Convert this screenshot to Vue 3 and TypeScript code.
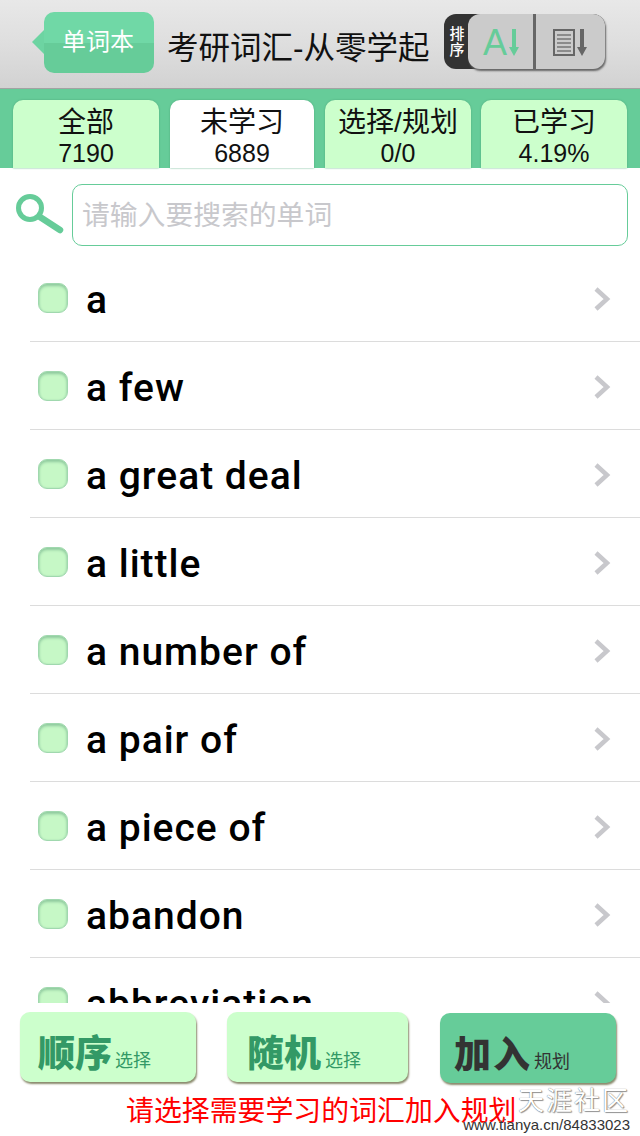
<script setup lang="ts">
const tabs = [
  { label: '全部', value: '7190', w: 146 },
  { label: '未学习', value: '6889', w: 144, active: true },
  { label: '选择/规划', value: '0/0', w: 146 },
  { label: '已学习', value: '4.19%', w: 146 },
]
const words = ['a', 'a few', 'a great deal', 'a little', 'a number of', 'a pair of', 'a piece of', 'abandon', 'abbreviation']
</script>

<template>
  <div class="page">
    <header class="nav">
      <button class="back"><span class="back-text">单词本</span></button>
      <h1 class="title">考研词汇-从零学起</h1>
      <div class="sort">
        <div class="sort-label"><span>排</span><span>序</span></div>
        <div class="seg">
          <div class="seg-item first">
            <span class="az">A</span>
            <svg class="down" width="10" height="27" viewBox="0 0 10 27"><path d="M3 0h4v18h3l-5 9-5-9h3z" fill="#66cc99"/></svg>
          </div>
          <div class="seg-item second">
            <svg width="34" height="28" viewBox="0 0 34 28">
              <path d="M1 1h20v25H1z" fill="none" stroke="#666" stroke-width="2"/>
              <path d="M4 6h14M4 10h14M4 14h14M4 18h14M4 22h14" stroke="#777" stroke-width="1.3"/>
              <path d="M27 0h4v18h3l-5 9-5-9h3z" fill="#666"/>
            </svg>
          </div>
        </div>
      </div>
    </header>

    <nav class="tabs">
      <div v-for="t in tabs" :key="t.label" class="tab" :class="{ active: t.active }" :style="{ width: t.w + 'px' }">
        <div class="tab-label">{{ t.label }}</div>
        <div class="tab-value">{{ t.value }}</div>
      </div>
    </nav>

    <div class="search">
      <svg class="lens" width="50" height="42" viewBox="0 0 50 42">
        <circle cx="15" cy="15" r="11.5" fill="none" stroke="#66cc99" stroke-width="5"/>
        <path d="M25 24l20 13" stroke="#66cc99" stroke-width="6.5" stroke-linecap="round"/>
      </svg>
      <div class="input">请输入要搜索的单词</div>
    </div>

    <ul class="list">
      <li v-for="w in words" :key="w" class="row">
        <span class="check"></span>
        <span class="word">{{ w }}</span>
        <svg class="chev" width="18" height="26" viewBox="0 0 18 26"><path d="M3 3l11 10L3 23" fill="none" stroke="#c8c8cc" stroke-width="4.5"/></svg>
      </li>
    </ul>

    <footer class="footer">
      <div class="actions">
        <div class="act w1"><b>顺序</b><small>选择</small></div>
        <div class="act w2"><b>随机</b><small>选择</small></div>
        <div class="act w3 primary"><b>加入</b><small>规划</small></div>
      </div>
      <p class="hint">请选择需要学习的词汇加入规划</p>
      <div class="mark">
        <div class="mark-name">天涯社区</div>
        <div class="mark-url">www.tianya.cn/84833023</div>
      </div>
    </footer>
  </div>
</template>

<style>
html, body { margin: 0; padding: 0; background: #fff; }
</style>

<style scoped>
.page {
  width: 640px;
  height: 1136px;
  display: flex;
  flex-direction: column;
  overflow: hidden;
  background: #fff;
  font-family: "Liberation Sans", "Noto Sans CJK SC", sans-serif;
}
.nav {
  height: 89px;
  box-sizing: border-box;
  flex: none;
  display: flex;
  align-items: flex-start;
  padding: 12px 35px 0 32px;
  background: linear-gradient(#e8e8e8 0, #dedede 50%, #d2d2d2 100%);
  border-bottom: 1px solid #a3a3a3;
}
.back {
  position: relative;
  margin: 0 0 0 12px;
  padding: 0;
  border: 0;
  width: 110px;
  height: 61px;
  border-radius: 10px;
  background: linear-gradient(#70d8a6 0 50%, #66cc99 50%);
  color: #fff;
  font-family: inherit;
  font-size: 24px;
}
.back::before {
  content: "";
  position: absolute;
  left: -12px;
  top: 18px;
  border: 12px solid transparent;
  border-left: 0;
  border-right-color: #6dd4a2;
}
.back-text { position: relative; top: -3px; left: -1px; }
.title {
  margin: 16px 0 0 13px;
  width: 277px;
  font-size: 31.5px;
  line-height: 40px;
  font-weight: 400;
  color: #111;
  white-space: nowrap;
}
.sort {
  position: relative;
  width: 161px;
  height: 55px;
  margin-top: 2px;
  display: flex;
  border-radius: 12px;
  background: #333;
}
.sort-label {
  width: 26px;
  box-sizing: border-box;
  display: flex;
  flex-direction: column;
  justify-content: center;
  align-items: center;
  color: #fff;
  font-size: 15px;
  line-height: 16px;
  font-weight: 500;
}
.seg {
  flex: 1;
  display: flex;
  border-radius: 12px;
  background: #cbcbcb;
  box-shadow: 1px 2px 2px #666;
  margin-left: -2px;
}
.seg-item {
  flex: 1;
  display: flex;
  align-items: center;
  justify-content: center;
}
.seg-item.first {
  flex: none;
  width: 65px;
  border-right: 3px solid #666;
  gap: 2px;
  padding-top: 2px;
  justify-content: flex-start;
}
.seg-item.first .az { margin-left: 15px; }
.seg-item.second { padding-top: 2px; padding-right: 2px; }
.az {
  color: #66cc99;
  font-size: 36px;
  line-height: 36px;
}
.tabs {
  flex: none;
  height: 79px;
  box-sizing: border-box;
  padding: 11px 0 0 13px;
  display: flex;
  gap: 11px;
  background: #66cc99;
}
.tab {
  flex: none;
  border-radius: 10px 10px 0 0;
  background: #ccffcc;
  text-align: center;
  color: #111;
  box-shadow: 0 0 2px #4da77b;
}
.tab:last-child { margin-left: -1px; }
.tab.active { background: #fff; }
.tab-label {
  font-size: 28px;
  line-height: 34px;
  margin-top: 6px;
}
.tab-value {
  font-size: 25px;
  line-height: 28px;
  margin-top: -1px;
}
.search {
  flex: none;
  display: flex;
  align-items: flex-start;
  height: 86px;
  box-sizing: border-box;
  padding: 16px 12px 0 16px;
}
.lens { margin: 9px 0 0 -1px; flex: none; }
.input {
  flex: 1;
  margin-left: 7px;
  height: 62px;
  box-sizing: border-box;
  border: 1px solid #66cc99;
  border-radius: 10px;
  padding: 2px 0 0 9px;
  font-size: 27.8px;
  line-height: 58px;
  color: #c8c8cc;
  white-space: nowrap;
}
.list {
  flex: 1;
  min-height: 0;
  margin: 0;
  padding: 0 0 0 30px;
  list-style: none;
  overflow: hidden;
}
.row {
  height: 88px;
  box-sizing: border-box;
  display: flex;
  align-items: center;
  padding-left: 8px;
  border-bottom: 1px solid #dcdcdc;
}
.check {
  flex: none;
  width: 30px;
  height: 30px;
  box-sizing: border-box;
  border-radius: 9px;
  background: #c6f8c6;
  border: 1px solid #a0d8ae;
  box-shadow: inset 0 2px 3px #8fca9e, inset 0 0 2px #a8dcb4;
}
.word {
  flex: 1;
  margin-left: 18px;
  padding-top: 4px;
  font-family: Roboto, "Liberation Sans", sans-serif;
  font-size: 39px;
  font-weight: 500;
  letter-spacing: 1px;
  line-height: 44px;
  color: #000;
}
.chev { flex: none; margin: 2px 29px 0 0; }
.footer {
  position: relative;
  flex: none;
  height: 133px;
  background: #fff;
}
.actions {
  display: flex;
  padding: 9px 0 0 20px;
  align-items: flex-start;
}
.act {
  flex: none;
  height: 70px;
  box-sizing: border-box;
  border-radius: 10px;
  background: #ccffcc;
  box-shadow: 1px 2px 2px #8a8a6c;
  color: #339966;
  display: flex;
  align-items: baseline;
  padding: 20px 0 0 18px;
}
.act b { font-size: 37px; line-height: 46px; font-weight: 900; }
.act small { font-size: 18px; margin-left: 3px; }
.w1 { width: 176px; }
.w2 { width: 181px; margin-left: 31px; padding-left: 20px; }
.w2 small { margin-left: 4px; }
.w3 { width: 176px; margin: 1px 0 0 32px; padding-left: 14px; }
.primary { background: #66cc99; color: #333; }
.primary b { letter-spacing: 2px; }
.primary small { margin-left: 2px; }
.hint {
  margin: 0;
  position: absolute;
  left: 126px;
  top: 91px;
  font-size: 27.9px;
  line-height: 36px;
  color: #ff0000;
  white-space: nowrap;
}
.mark {
  position: absolute;
  right: 10px;
  top: 83px;
  text-align: right;
}
.mark-name {
  font-size: 26px;
  line-height: 30px;
  letter-spacing: 2px;
  color: #fff;
  text-shadow: 0 0 1px #555, 1px 1px 1px #999;
}
.mark-url {
  font-size: 15px;
  line-height: 18px;
  color: #333;
  text-shadow: 0 0 1px #fff;
}
</style>
